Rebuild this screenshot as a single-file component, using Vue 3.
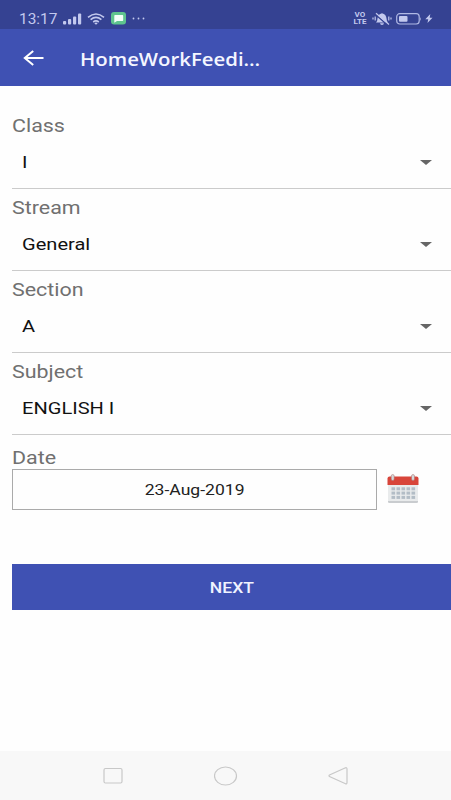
<template>
  <div class="screen">
    <!-- Status bar -->
    <div class="status-bar">
      <span class="clock">13:17</span>
      <svg class="signal" width="19" height="12" viewBox="0 0 19 12">
        <rect x="0" y="8" width="3.2" height="3.5" rx="1" />
        <rect x="5" y="6" width="3.2" height="5.5" rx="1" />
        <rect x="10" y="3.5" width="3.2" height="8" rx="1" />
        <rect x="15" y="0.5" width="3.2" height="11" rx="1" />
      </svg>
      <svg class="wifi" width="18" height="12" viewBox="0 0 18 12">
        <path d="M1 4.3Q9-2.3 17 4.3M3.6 6.7Q9 2.2 14.4 6.7M6.2 9Q9 6.8 11.8 9" />
        <path d="M7.3 10.2Q9 9 10.7 10.2L9 11.8z" class="solid" />
      </svg>
      <svg class="chat" width="15" height="13" viewBox="0 0 15 13">
        <rect width="15" height="12.5" rx="3" fill="#5fc58e" />
        <path d="M4 3h7.500q.7 0 .7.7v4.600q0 .7-.7.7H6l-2.700 1.800V3.700Q3.300 3 4 3z" fill="#f2fff8" />
      </svg>
      <svg class="more" width="13" height="3" viewBox="0 0 13 3">
        <circle cx="1.5" cy="1.5" r="0.9" />
        <circle cx="6.5" cy="1.5" r="0.9" />
        <circle cx="11.5" cy="1.5" r="0.9" />
      </svg>
      <div class="volte"><span>VO</span><span>LTE</span></div>
      <svg class="mute" width="20" height="14" viewBox="0 0 20 14">
        <path d="M4 10.500Q5.500 9 5.500 6.500 5.800 2.300 10 1.200 14.200 2.300 14.500 6.500 14.500 9 16 10.500zM8 11.300h4q-.2 1.700-2 1.700t-2-1.700z" />
        <path d="M3.200 2.300L15.800 13.300" stroke="#354292" stroke-width="1.500" />
        <path d="M4 1.200L17 12.500M3.200 4.500v4M1 5.500v2M16.800 4.500v4M19 5.500v2" stroke="#c3c9ee" stroke-width="1.200" />
      </svg>
      <svg class="battery" width="26" height="12" viewBox="0 0 26 12">
        <rect x="0.7" y="0.7" width="22.5" height="10.3" rx="3" fill="none" stroke="#b0b8e4" stroke-width="1.2" />
        <rect x="3" y="3" width="8.5" height="5.8" rx="1" />
        <path d="M24 4q1.500 2 0 4z" />
      </svg>
      <svg class="bolt" width="8" height="9" viewBox="0 0 8 9">
        <path d="M5.300 0L.3 5.200h2.900L2.500 9l5-5.300H4.700z" />
      </svg>
    </div>

    <!-- App bar -->
    <header class="app-bar">
      <button class="back" aria-label="Back">
        <svg width="22" height="18" viewBox="0 0 22 18">
          <path d="M20.500 9H2M10.200 2L1.800 9l8.400 7" />
        </svg>
      </button>
      <h1 class="title">HomeWorkFeedi…</h1>
    </header>

    <main class="form">
      <div v-for="field in fields" :key="field.label" class="field">
        <div class="label"><span>{{ field.label }}</span></div>
        <div class="select">
          <span class="value">{{ field.value }}</span>
          <svg class="caret" width="12" height="5" viewBox="0 0 12 5">
            <path d="M0 0h12L6 5z" />
          </svg>
        </div>
      </div>

      <div class="label date-label"><span>Date</span></div>
      <div class="date-row">
        <div class="date-input"><span>{{ date }}</span></div>
        <svg class="calendar" width="32" height="30" viewBox="0 0 32 30">
          <rect x="1" y="3" width="30" height="26" rx="2" fill="#e9ebec" />
          <path d="M1 27h30v.5q0 1.500-1.500 1.500h-27Q1 29 1 27.500z" fill="#c9cccf" />
          <path d="M.5 11V4.500Q.5 2.500 2.500 2.500h27q2 0 2 2V11z" fill="#d8453a" />
          <g fill="#b3bdc6">
            <template v-for="row in 3" :key="row">
              <rect
                v-for="col in 5"
                :key="col"
                :x="-0.5 + col * 5"
                :y="9 + row * 4.3"
                width="3.6"
                height="3"
              />
            </template>
          </g>
          <g fill="#d4d8da" stroke="#aa6a66" stroke-width="0.5">
            <rect x="4.2" y="0.5" width="3" height="6" rx="1.5" />
            <rect x="24.5" y="0.5" width="3" height="6" rx="1.5" />
          </g>
        </svg>
      </div>

      <button class="next"><span>NEXT</span></button>
    </main>

    <!-- System navigation -->
    <nav class="nav-bar">
      <svg width="20" height="20" viewBox="0 0 20 20">
        <rect x="1" y="2.5" width="18" height="14.5" rx="1.5" />
      </svg>
      <svg width="24" height="20" viewBox="0 0 24 20">
        <ellipse cx="11.5" cy="10" rx="11" ry="9" />
      </svg>
      <svg width="20" height="20" viewBox="0 0 20 20">
        <path d="M17.500 1.800L1.500 9q-1 .8 0 1.600l16 7.200q1.500.4 1.500-1.200V3q0-1.600-1.500-1.200z" />
      </svg>
    </nav>
  </div>
</template>

<script setup>
import { ref } from 'vue';

const fields = ref([
  { label: 'Class', value: 'I' },
  { label: 'Stream', value: 'General' },
  { label: 'Section', value: 'A' },
  { label: 'Subject', value: 'ENGLISH I' }
]);

const date = ref('23-Aug-2019');
</script>

<style>
body {
  margin: 0;
  background: #fefefe;
}
</style>

<style scoped>
.screen {
  display: flex;
  flex-direction: column;
  width: 451px;
  height: 800px;
  overflow: hidden;
  background: #fefefe;
  font-family: Roboto, sans-serif;
}

button {
  border: none;
  padding: 0;
  font-family: inherit;
}

.status-bar {
  display: flex;
  align-items: center;
  box-sizing: border-box;
  height: 29px;
  padding: 8px 0 0 19px;
  background: #354292;
  fill: #c3c9ee;
  color: #c3c9ee;
}

.clock {
  width: 44px;
  font-size: 14px;
  line-height: 20px;
  transform: scaleX(1.1);
  transform-origin: left;
}

.wifi {
  margin-left: 5px;
  fill: none;
  stroke: #c3c9ee;
  stroke-width: 1.6;
}

.wifi .solid {
  fill: #c3c9ee;
  stroke: none;
}

.chat {
  margin-left: 6px;
}

.more {
  margin-left: 6px;
}

.volte {
  display: flex;
  flex-direction: column;
  align-items: center;
  width: 14px;
  margin-left: auto;
  font-size: 7px;
  font-weight: 700;
  line-height: 7px;
  transform: scaleX(1.15);
}

.volte span {
  height: 7px;
  overflow: hidden;
}

.mute {
  margin-left: 5px;
}

.battery {
  margin-left: 4px;
}

.bolt {
  margin: 0 18px 0 3px;
}

.app-bar {
  display: flex;
  align-items: center;
  height: 57px;
  padding-left: 23px;
  background: #3f51b3;
}

.back {
  display: flex;
  width: 57px;
  background: none;
}

.back svg {
  fill: none;
  stroke: #fff;
  stroke-width: 2;
}

.title {
  margin: 2px 0 0;
  color: #f4f6ff;
  font-family: "Open Sans", sans-serif;
  font-size: 18.5px;
  font-weight: 600;
  white-space: nowrap;
  transform: scaleX(1.1);
  transform-origin: left;
}

.form {
  flex: 1;
  padding: 26px 0 0 12px;
}

.field {
  height: 82px;
}

.label {
  height: 26px;
  color: #707070;
  font-size: 18px;
  line-height: 28px;
}

.label span {
  display: inline-block;
  transform: scaleX(1.19);
  transform-origin: left;
}

.select {
  display: flex;
  align-items: center;
  justify-content: space-between;
  box-sizing: border-box;
  height: 51px;
  padding: 0 19px 2px 10px;
  border-bottom: 1px solid #cbcbcb;
}

.value {
  color: #111;
  font-size: 17px;
  transform: scaleX(1.18);
  transform-origin: left;
}

.caret {
  fill: #666;
}

.date-label {
  margin-top: 4px;
}

.date-row {
  display: flex;
  align-items: center;
  margin-top: -1px;
}

.date-input {
  box-sizing: border-box;
  width: 365px;
  height: 41px;
  border: 1.5px solid #aaa;
  color: #222;
  font-size: 15px;
  line-height: 41px;
  text-align: center;
}

.date-input span,
.next span {
  display: inline-block;
  transform: scaleX(1.17);
}

.calendar {
  margin: 0 0 2px 10px;
}

.next {
  display: block;
  width: 439px;
  height: 46px;
  margin-top: 54px;
  padding-top: 2px;
  background: #3f51b3;
  color: #f0f3ff;
  font-size: 15px;
  font-weight: 500;
}

.nav-bar {
  display: flex;
  align-items: center;
  justify-content: space-between;
  box-sizing: border-box;
  height: 49px;
  padding: 0 103px;
  background: #f8f8f8;
  fill: none;
  stroke: #c8c8c8;
  stroke-width: 1.2;
}
</style>
